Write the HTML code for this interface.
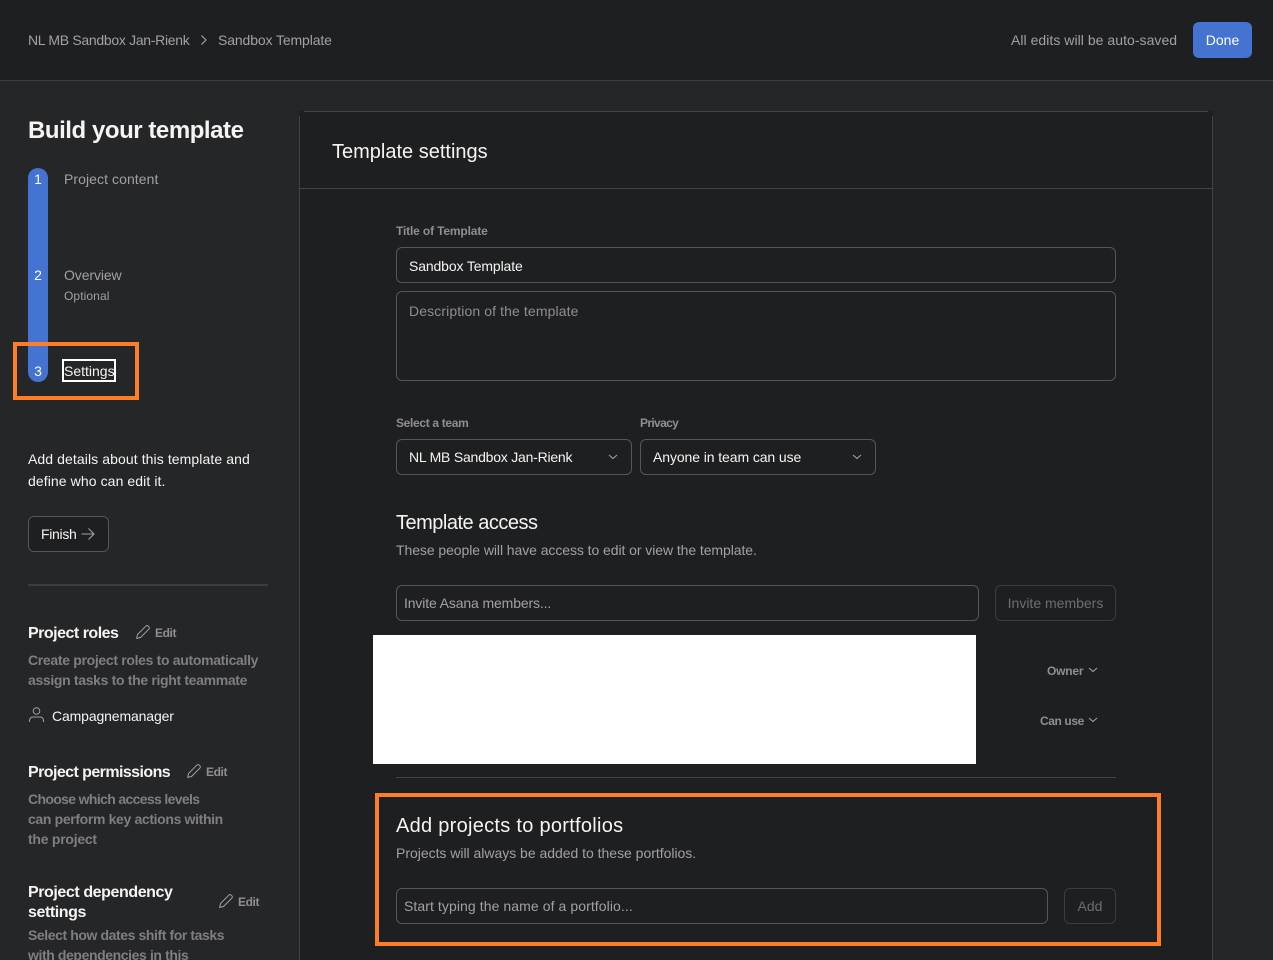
<!DOCTYPE html>
<html lang="en">
<head>
<meta charset="utf-8">
<title>Build your template</title>
<style>
html,body{margin:0;padding:0;width:1273px;height:960px;overflow:hidden;background:#252628;font-family:"Liberation Sans",Arial,sans-serif;}
#root{position:relative;width:1273px;height:960px;overflow:hidden;background:#252628;}
.a{position:absolute;box-sizing:border-box;}
.t{position:absolute;white-space:nowrap;line-height:20px;font-size:14px;}
.box{position:absolute;box-sizing:border-box;border:1px solid #565557;border-radius:6px;background:#1e1f21;}
svg{position:absolute;overflow:visible;}
</style>
</head>
<body>
<div id="root">
<!-- top bar -->
<div class="a" style="left:0;top:0;width:1273px;height:81px;background:#1e1f21;border-bottom:1px solid #3d3d3f;"></div>
<div class="t" style="left:28px;top:30px;color:#a2a0a2;letter-spacing:-.3px;">NL MB Sandbox Jan-Rienk</div>
<svg style="left:200px;top:34px" width="8" height="12" viewBox="0 0 8 12"><path d="M1.500 1.500 6 6l-4.500 4.500" fill="none" stroke="#a2a0a2" stroke-width="1.200"/></svg>
<div class="t" style="left:218px;top:30px;color:#a2a0a2;letter-spacing:-.12px;">Sandbox Template</div>
<div class="t" style="left:1011px;top:30px;color:#a2a0a2;letter-spacing:.04px;">All edits will be auto-saved</div>
<div class="a" style="left:1193px;top:22px;width:59px;height:36px;background:#4573d2;border-radius:6px;"></div>
<div class="t" style="left:1193px;top:30px;width:59px;text-align:center;color:#fff;">Done</div>

<!-- left column -->
<div class="t" style="left:28px;top:116px;font-size:24px;line-height:30px;font-weight:700;color:#f5f4f3;letter-spacing:-.45px;">Build your template</div>

<div class="a" style="left:28px;top:168px;width:20px;height:214px;background:#4573d2;border-radius:10px;"></div>
<div class="t" style="left:28px;top:169px;width:20px;text-align:center;color:#fff;">1</div>
<div class="t" style="left:28px;top:265px;width:20px;text-align:center;color:#fff;">2</div>
<div class="t" style="left:28px;top:361px;width:20px;text-align:center;color:#fff;">3</div>
<div class="t" style="left:64px;top:169px;color:#a2a0a2;letter-spacing:.07px;">Project content</div>
<div class="t" style="left:64px;top:265px;color:#a2a0a2;letter-spacing:-.1px;">Overview</div>
<div class="t" style="left:64px;top:286px;font-size:12px;color:#a2a0a2;letter-spacing:.1px;">Optional</div>
<div class="a" style="left:62px;top:359px;width:54px;height:23px;border:2px solid #fff;"></div>
<div class="t" style="left:64px;top:361px;color:#f5f4f3;">Settings</div>
<div class="a" style="left:13px;top:342px;width:126px;height:58px;border:4px solid #fd7e26;"></div>

<div class="t" style="left:28px;top:448px;line-height:22px;color:#f5f4f3;letter-spacing:.09px;">Add details about this template and</div>
<div class="t" style="left:28px;top:470px;line-height:22px;color:#f5f4f3;letter-spacing:.09px;">define who can edit it.</div>
<div class="box" style="left:28px;top:516px;width:81px;height:36px;"></div>
<div class="t" style="left:41px;top:524px;color:#f5f4f3;letter-spacing:-.3px;">Finish</div>
<svg style="left:81px;top:527px" width="14" height="14" viewBox="0 0 14 14"><path d="M.5 7h12.500M7.500 1.500 13 7l-5.500 5.500" fill="none" stroke="#a2a0a2" stroke-width="1.100"/></svg>
<div class="a" style="left:28px;top:584px;width:240px;height:2px;background:#3d3d3f;"></div>

<div class="t" style="left:28px;top:624px;font-size:16px;font-weight:700;color:#f5f4f3;letter-spacing:-.5px;">Project roles</div>
<svg style="left:136px;top:625px" width="14" height="14" viewBox="0 0 14 14"><path d="M.7 13.300 1.500 9.500 9.800 1.200c.7-.7 1.800-.7 2.500 0l.5.5c.7.7.7 1.800 0 2.500L4.500 12.500z" fill="none" stroke="#a2a0a2" stroke-width="1"/></svg>
<div class="t" style="left:155px;top:623px;font-size:12px;font-weight:700;color:#8f8e90;letter-spacing:-.4px;">Edit</div>
<div class="t" style="left:28px;top:650px;font-size:14px;font-weight:700;color:#7f7e80;letter-spacing:-.32px;">Create project roles to automatically</div>
<div class="t" style="left:28px;top:670px;font-size:14px;font-weight:700;color:#7f7e80;letter-spacing:-.33px;">assign tasks to the right teammate</div>
<svg style="left:29px;top:707px" width="15" height="15" viewBox="0 0 15 15"><circle cx="7.500" cy="4" r="3.300" fill="none" stroke="#a2a0a2"/><path d="M.5 15v-1.500c0-2 1.500-3.500 3.500-3.500h7c2 0 3.500 1.500 3.500 3.500V15" fill="none" stroke="#a2a0a2"/></svg>
<div class="t" style="left:52px;top:706px;color:#f5f4f3;letter-spacing:-.13px;">Campagnemanager</div>

<div class="t" style="left:28px;top:763px;font-size:16px;font-weight:700;color:#f5f4f3;letter-spacing:-.57px;">Project permissions</div>
<svg style="left:187px;top:764px" width="14" height="14" viewBox="0 0 14 14"><path d="M.7 13.300 1.500 9.500 9.800 1.200c.7-.7 1.800-.7 2.500 0l.5.5c.7.7.7 1.800 0 2.500L4.500 12.500z" fill="none" stroke="#a2a0a2" stroke-width="1"/></svg>
<div class="t" style="left:206px;top:762px;font-size:12px;font-weight:700;color:#8f8e90;letter-spacing:-.4px;">Edit</div>
<div class="t" style="left:28px;top:789px;font-weight:700;color:#7f7e80;letter-spacing:-.65px;">Choose which access levels</div>
<div class="t" style="left:28px;top:809px;font-weight:700;color:#7f7e80;letter-spacing:-.35px;">can perform key actions within</div>
<div class="t" style="left:28px;top:829px;font-weight:700;color:#7f7e80;letter-spacing:-.25px;">the project</div>

<div class="t" style="left:28px;top:883px;font-size:16px;font-weight:700;color:#f5f4f3;letter-spacing:-.42px;">Project dependency</div>
<div class="t" style="left:28px;top:903px;font-size:16px;font-weight:700;color:#f5f4f3;letter-spacing:-.42px;">settings</div>
<svg style="left:219px;top:894px" width="14" height="14" viewBox="0 0 14 14"><path d="M.7 13.300 1.500 9.500 9.800 1.200c.7-.7 1.800-.7 2.500 0l.5.5c.7.7.7 1.800 0 2.500L4.500 12.500z" fill="none" stroke="#a2a0a2" stroke-width="1"/></svg>
<div class="t" style="left:238px;top:892px;font-size:12px;font-weight:700;color:#8f8e90;letter-spacing:-.4px;">Edit</div>
<div class="t" style="left:28px;top:925px;font-weight:700;color:#7f7e80;letter-spacing:-.41px;">Select how dates shift for tasks</div>
<div class="t" style="left:28px;top:945px;font-weight:700;color:#7f7e80;letter-spacing:-.4px;">with dependencies in this</div>

<!-- main card -->
<div class="a" style="left:299px;top:111px;width:914px;height:849px;background:#1e1f21;"></div>
<div class="a" style="left:304px;top:111px;width:904px;height:1px;background:#424244;"></div>
<div class="a" style="left:299px;top:116px;width:1px;height:844px;background:#424244;"></div>
<div class="a" style="left:1212px;top:116px;width:1px;height:844px;background:#424244;"></div>
<div class="a" style="left:300px;top:188px;width:912px;height:1px;background:#424244;"></div>
<div class="t" style="left:332px;top:139px;font-size:20px;line-height:26px;color:#f5f4f3;">Template settings</div>

<div class="t" style="left:396px;top:221px;font-size:12px;font-weight:700;color:#8f8e90;letter-spacing:-.15px;">Title of Template</div>
<div class="box" style="left:396px;top:247px;width:720px;height:36px;"></div>
<div class="t" style="left:409px;top:256px;color:#f5f4f3;letter-spacing:-.13px;">Sandbox Template</div>
<div class="box" style="left:396px;top:291px;width:720px;height:90px;"></div>
<div class="t" style="left:409px;top:301px;color:#8f8e90;letter-spacing:.11px;">Description of the template</div>

<div class="t" style="left:396px;top:413px;font-size:12px;font-weight:700;color:#8f8e90;letter-spacing:-.33px;">Select a team</div>
<div class="t" style="left:640px;top:413px;font-size:12px;font-weight:700;color:#8f8e90;letter-spacing:-.65px;">Privacy</div>
<div class="box" style="left:396px;top:439px;width:236px;height:36px;"></div>
<div class="t" style="left:409px;top:447px;color:#f5f4f3;letter-spacing:-.22px;">NL MB Sandbox Jan-Rienk</div>
<svg style="left:608px;top:454px" width="10" height="6" viewBox="0 0 10 6"><path d="M1 1l4 3.500L9 1" fill="none" stroke="#a2a0a2" stroke-width="1.100"/></svg>
<div class="box" style="left:640px;top:439px;width:236px;height:36px;"></div>
<div class="t" style="left:653px;top:447px;color:#f5f4f3;letter-spacing:-.09px;">Anyone in team can use</div>
<svg style="left:852px;top:454px" width="10" height="6" viewBox="0 0 10 6"><path d="M1 1l4 3.500L9 1" fill="none" stroke="#a2a0a2" stroke-width="1.100"/></svg>

<div class="t" style="left:396px;top:510px;font-size:20px;line-height:26px;color:#f5f4f3;letter-spacing:-.5px;">Template access</div>
<div class="t" style="left:396px;top:540px;color:#a2a0a2;letter-spacing:-.07px;">These people will have access to edit or view the template.</div>
<div class="box" style="left:396px;top:585px;width:583px;height:36px;"></div>
<div class="t" style="left:404px;top:593px;color:#a2a0a2;letter-spacing:-.13px;">Invite Asana members...</div>
<div class="box" style="left:995px;top:585px;width:121px;height:36px;border-color:#3d3d3f;"></div>
<div class="t" style="left:995px;top:593px;width:121px;text-align:center;color:#6d6e6f;">Invite members</div>

<div class="a" style="left:373px;top:635px;width:603px;height:129px;background:#fff;"></div>
<div class="t" style="left:1047px;top:661px;font-size:12px;font-weight:700;color:#8f8e90;letter-spacing:-.2px;">Owner</div>
<svg style="left:1088px;top:667px" width="10" height="6" viewBox="0 0 10 6"><path d="M1 1l4 3.500L9 1" fill="none" stroke="#a2a0a2" stroke-width="1.100"/></svg>
<div class="t" style="left:1040px;top:711px;font-size:12px;font-weight:700;color:#8f8e90;letter-spacing:-.4px;">Can use</div>
<svg style="left:1088px;top:717px" width="10" height="6" viewBox="0 0 10 6"><path d="M1 1l4 3.500L9 1" fill="none" stroke="#a2a0a2" stroke-width="1.100"/></svg>
<div class="a" style="left:396px;top:777px;width:720px;height:1px;background:#424244;"></div>

<div class="t" style="left:396px;top:813px;font-size:20px;line-height:26px;color:#f5f4f3;letter-spacing:.28px;">Add projects to portfolios</div>
<div class="t" style="left:396px;top:843px;color:#a2a0a2;letter-spacing:-.02px;">Projects will always be added to these portfolios.</div>
<div class="box" style="left:396px;top:888px;width:652px;height:36px;"></div>
<div class="t" style="left:404px;top:896px;color:#a2a0a2;letter-spacing:.08px;">Start typing the name of a portfolio...</div>
<div class="box" style="left:1064px;top:888px;width:52px;height:36px;border-color:#3d3d3f;"></div>
<div class="t" style="left:1064px;top:896px;width:52px;text-align:center;color:#6d6e6f;">Add</div>
<div class="a" style="left:375px;top:793px;width:786px;height:153px;border:4px solid #fd7e26;"></div>
</div>
</body>
</html>
